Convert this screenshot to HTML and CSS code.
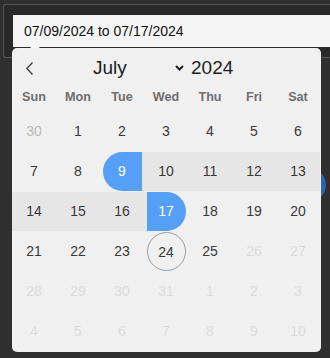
FILE: index.html
```html
<!DOCTYPE html>
<html lang="en">
<head>
    <meta charset="UTF-8">
    <meta name="viewport" content="width=device-width, initial-scale=1.0">
    <title>Date range</title>
    <link rel="stylesheet" href="styles.css">
</head>
<body>

<!-- Camp cu intervalul de date -->
<div class="field-box">
    <input type="text" class="date-input" value="07/09/2024 to 07/17/2024" readonly>
</div>

<!-- bula din spatele calendarului -->
<span class="blob"></span>

<!-- Calendar -->
<div class="calendar">
    <span class="arrow-top"></span>

    <div class="cal-header">
        <span class="prev">
            <svg width="7" height="13" viewBox="0 0 7 13"><path d="M6.5 0.5 L0.8 6.5 L6.5 12.5" fill="none" stroke="#3c3c3c" stroke-width="1.3"/></svg>
        </span>
        <span class="month-select">
            July
            <svg class="caret" width="9" height="6" viewBox="0 0 9 6"><path d="M1 1 L4.5 4.5 L8 1" fill="none" stroke="#222" stroke-width="2"/></svg>
        </span>
        <span class="year">2024</span>
    </div>

    <div class="weekdays">
        <span>Sun</span><span>Mon</span><span>Tue</span><span>Wed</span><span>Thu</span><span>Fri</span><span>Sat</span>
    </div>

    <div class="days">
        <span class="day muted"><i>30</i></span>
        <span class="day"><i>1</i></span>
        <span class="day"><i>2</i></span>
        <span class="day"><i>3</i></span>
        <span class="day"><i>4</i></span>
        <span class="day"><i>5</i></span>
        <span class="day"><i>6</i></span>

        <span class="day"><i>7</i></span>
        <span class="day"><i>8</i></span>
        <span class="day start"><i>9</i></span>
        <span class="day in-range"><i>10</i></span>
        <span class="day in-range"><i>11</i></span>
        <span class="day in-range"><i>12</i></span>
        <span class="day in-range"><i>13</i></span>

        <span class="day in-range"><i>14</i></span>
        <span class="day in-range"><i>15</i></span>
        <span class="day in-range"><i>16</i></span>
        <span class="day end"><i>17</i></span>
        <span class="day"><i>18</i></span>
        <span class="day"><i>19</i></span>
        <span class="day"><i>20</i></span>

        <span class="day"><i>21</i></span>
        <span class="day"><i>22</i></span>
        <span class="day"><i>23</i></span>
        <span class="day today"><i>24</i></span>
        <span class="day"><i>25</i></span>
        <span class="day disabled"><i>26</i></span>
        <span class="day disabled"><i>27</i></span>

        <span class="day disabled"><i>28</i></span>
        <span class="day disabled"><i>29</i></span>
        <span class="day disabled"><i>30</i></span>
        <span class="day disabled"><i>31</i></span>
        <span class="day disabled"><i>1</i></span>
        <span class="day disabled"><i>2</i></span>
        <span class="day disabled"><i>3</i></span>

        <span class="day disabled"><i>4</i></span>
        <span class="day disabled"><i>5</i></span>
        <span class="day disabled"><i>6</i></span>
        <span class="day disabled"><i>7</i></span>
        <span class="day disabled"><i>8</i></span>
        <span class="day disabled"><i>9</i></span>
        <span class="day disabled"><i>10</i></span>
    </div>
</div>

</body>
</html>
```

FILE: styles.css
```css
/* Stil general pentru pagina */
body {
    background-color: #2f2f2f;
    font-family: 'Liberation Sans', Arial, sans-serif;
    margin: 0;
    padding: 4px 0 0 3px;
    overflow: hidden;
    position: relative;
    height: 358px;
    box-sizing: border-box;
}

/* Cutia din jurul input-ului (taiata la marginea dreapta) */
.field-box {
    height: 54px;
    box-sizing: border-box;
    padding: 10px 0 0 9px;
    background-color: #292929;
    border: 1px solid #555;
    border-right: none;
    border-radius: 3px 0 0 3px;
}

.date-input {
    display: block;
    width: 100%;
    height: 32px;
    box-sizing: border-box;
    padding: 0 0 0 11px;
    margin: 0;
    border: none;
    background-color: #f5f5f5;
    color: #111;
    font-family: inherit;
    font-size: 14px;
    outline: none;
}

.blob {
    position: absolute;
    left: 292px;
    top: 168px;
    width: 34px;
    height: 34px;
    border-radius: 50%;
    background-color: #2d64ab;
}

/* Calendar popup */
.calendar {
    position: absolute;
    left: 12px;
    top: 48px;
    z-index: 2;
    width: 309px;
    height: 304px;
    background-color: #f0f0f0;
    border-radius: 5px;
    color: #393939;
}

.arrow-top {
    position: absolute;
    left: 18px;
    top: -4px;
    width: 0;
    height: 0;
    border-left: 5px solid transparent;
    border-right: 5px solid transparent;
    border-bottom: 4px solid #fafafa;
}

.cal-header {
    display: flex;
    align-items: center;
    height: 35px;
    box-sizing: border-box;
    padding: 6px 0 0 14px;
}

.prev {
    display: flex;
    width: 7px;
}

.month-select {
    display: flex;
    align-items: center;
    justify-content: space-between;
    width: 91px;
    margin: -2px 0 0 60px;
    font-size: 19px;
    line-height: 22px;
    color: #1e1e1e;
}

.caret {
    margin-top: 1px;
}

.year {
    margin: -2px 0 0 7px;
    font-size: 19px;
    line-height: 22px;
    color: #1e1e1e;
}

.weekdays {
    display: grid;
    grid-template-columns: repeat(7, 44px);
    height: 28px;
    align-items: center;
    font-size: 12.6px;
    font-weight: bold;
    color: #6e6e6e;
    text-align: center;
}

.days {
    display: grid;
    grid-template-columns: repeat(7, 44px);
    grid-auto-rows: 39px;
    row-gap: 1px;
    padding-top: 1px;
}

.day {
    display: flex;
    justify-content: center;
    font-size: 14px;
}

.day i {
    font-style: normal;
    width: 39px;
    height: 39px;
    line-height: 39px;
    text-align: center;
    box-sizing: border-box;
}

.day.muted {
    color: #bbbbbb;
}

.day.disabled {
    color: #dcdcdc;
}

.day.in-range {
    background-color: #e6e6e6;
}

.day.start {
    background: linear-gradient(to right, transparent 50%, #e6e6e6 50%);
}

.day.start i {
    background-color: #569ff7;
    color: #fff;
    border-radius: 50px 0 0 50px;
}

.day.end {
    background: linear-gradient(to right, #e6e6e6 50%, transparent 50%);
}

.day.end i {
    background-color: #569ff7;
    color: #fff;
    border-radius: 0 50px 50px 0;
}

.day.today i {
    border: 1px solid #959ea9;
    border-radius: 50%;
}
```
